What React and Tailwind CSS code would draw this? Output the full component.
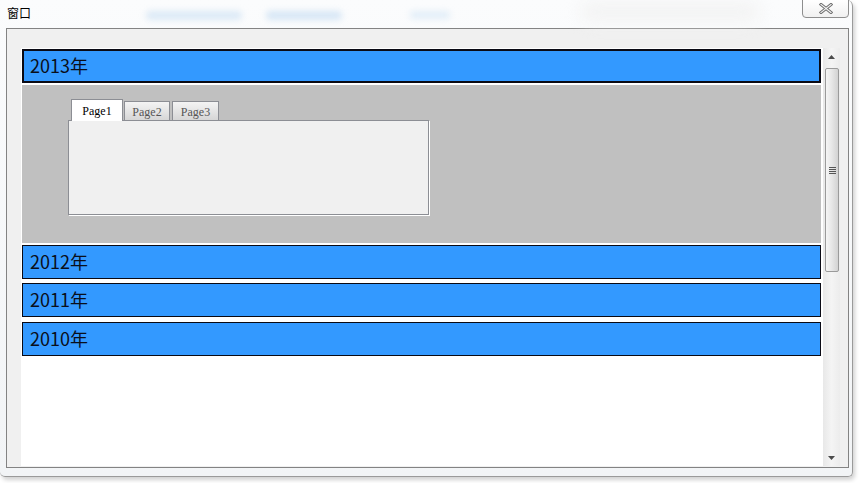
import React, { useState } from 'react';

const years = ['2013年', '2012年', '2011年', '2010年'];
const tabs = [
    { label: 'Page1', w: 'w-[52px]' },
    { label: 'Page2', w: 'w-[46px]' },
    { label: 'Page3', w: 'w-[47px]' },
];

const YearBar = ({ label, active, className }) => (
    <div
        className={`h-[34px] w-[799px] shrink-0 bg-[#3399ff] flex items-center pb-[2px] text-[18px] text-[#0a0f1a] ${active ? 'border-2 border-[#0a0a14] pl-[6px]' : 'border border-[#0a0a14] pl-[7px]'} ${className || ''}`}
    >
        {label}
    </div>
);

const TabControl = () => {
    const [current, setCurrent] = useState(0);
    return (
        <div className="ml-[46px] mt-[14px] w-[361px]">
            {/* Tab strip */}
            <div className="flex items-end h-[21px] pl-[3px] gap-[1px]">
                {tabs.map((t, i) => (
                    <div
                        key={t.label}
                        onClick={() => setCurrent(i)}
                        className={`${t.w} flex justify-center border border-b-0 border-[#8c8e94] text-[12px] ${current === i
                            ? 'h-[22px] -mb-[1px] bg-white text-black pt-[2px] relative z-10'
                            : 'h-[19px] bg-gradient-to-b from-[#f4f4f4] to-[#d6d6d6] text-[#555] pt-[1px] ' + (i === 2 ? 'ml-[1px]' : '')
                            }`}
                        style={{ fontFamily: '"Liberation Serif", serif' }}
                    >
                        {t.label}
                    </div>
                ))}
            </div>
            {/* Tab page */}
            <div className="h-[95px] bg-[#f0f0f0] border border-[#8c8e94] shadow-[1px_1px_0_#ffffff]" />
        </div>
    );
};

const ScrollBar = () => (
    <div className="w-[17px] h-full bg-gradient-to-r from-[#e8e8e8] via-[#f4f4f4] to-[#ececec] relative flex flex-col items-center">
        {/* up arrow */}
        <svg width="7" height="4" viewBox="0 0 7 4" className="mt-[7px]">
            <path d="M3.5 0 L7 4 L0 4 Z" fill="#4a4a4a" />
        </svg>
        {/* thumb */}
        <div className="mt-[9px] ml-[1px] w-[14px] h-[204px] rounded-[2px] border border-[#9a9a9a] bg-gradient-to-r from-[#f6f6f6] via-[#e6e6e6] to-[#d2d2d2] flex items-center justify-center">
            <div className="flex flex-col gap-[1px]">
                <div className="w-[7px] h-[1px] bg-[#555]" />
                <div className="w-[7px] h-[1px] bg-[#555]" />
                <div className="w-[7px] h-[1px] bg-[#555]" />
                <div className="w-[7px] h-[1px] bg-[#555]" />
            </div>
        </div>
        {/* down arrow */}
        <svg width="7" height="4" viewBox="0 0 7 4" className="absolute bottom-[6px] left-[5px]">
            <path d="M0 0 L7 0 L3.5 4 Z" fill="#4a4a4a" />
        </svg>
    </div>
);

const App = () => {
    return (
        <div
            className="w-[861px] h-[483px] bg-white overflow-hidden relative"
            style={{ fontFamily: '"Noto Sans CJK SC", "Noto Sans", sans-serif' }}
        >
            {/* Window frame */}
            <div className="w-[853px] h-[477px] rounded-tr-[6px] rounded-b-[5px] border-r border-b border-[#9a9a9a] shadow-[2px_3px_4px_rgba(0,0,0,0.18)] bg-gradient-to-b from-[#fbfcfd] to-[#f2f4f6] flex flex-col">
                {/* Title bar */}
                <div className="h-[28px] relative shrink-0">
                    <span className="absolute left-[7px] top-[7px] text-[12px] text-black leading-none">窗口</span>
                    {/* blurred glass background */}
                    <div className="absolute left-[146px] top-[11px] w-[96px] h-[9px] rounded-full bg-[#dbe9f6] blur-[3px]" />
                    <div className="absolute left-[266px] top-[11px] w-[76px] h-[9px] rounded-full bg-[#d6e6f5] blur-[3px]" />
                    <div className="absolute left-[410px] top-[11px] w-[40px] h-[8px] rounded-full bg-[#e2eef8] blur-[3px]" />
                    <div className="absolute left-[580px] top-[2px] w-[180px] h-[20px] rounded-full bg-[#f3f3f3] blur-[8px]" />
                    {/* close button */}
                    <div className="absolute left-[802px] -top-[1px] w-[47px] h-[19px] rounded-b-[4px] border border-[#8e8e8e] bg-gradient-to-b from-[#ffffff] to-[#f1f1f1] flex items-center justify-center">
                        <svg width="14" height="11" viewBox="0 0 14 11">
                            <path d="M2 1.5 L12 9.5 M12 1.5 L2 9.5" stroke="#6b6b6b" strokeWidth="3" strokeLinecap="square" />
                            <path d="M2 1.5 L12 9.5 M12 1.5 L2 9.5" stroke="#f4f4f4" strokeWidth="1.2" strokeLinecap="square" />
                        </svg>
                    </div>
                </div>

                {/* Client area */}
                <div className="ml-[6px] w-[843px] h-[440px] border border-[#838383] bg-[#f0f0f0] pl-[14px] pr-[8px] pt-[19px] pb-[1px]">
                    <div className="w-[819px] h-[418px] bg-white flex">
                        {/* Scroll content */}
                        <div className="w-[802px] h-full overflow-hidden pl-[1px] pt-[1px] flex flex-col">
                            <YearBar label={years[0]} active />
                            <div className="mt-[2px] h-[158px] w-[799px] shrink-0 bg-[#c0c0c0] flex flex-col">
                                <TabControl />
                            </div>
                            <YearBar label={years[1]} className="mt-[2px]" />
                            <YearBar label={years[2]} className="mt-[4px]" />
                            <YearBar label={years[3]} className="mt-[5px]" />
                        </div>
                        <ScrollBar />
                    </div>
                </div>
            </div>
        </div>
    );
};

export default App;
